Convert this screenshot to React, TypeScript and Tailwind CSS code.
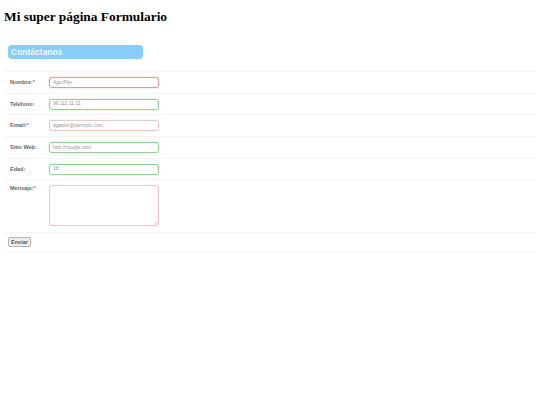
import React from 'react'

function Label({ text, required }: { text: string; required?: boolean }) {
  return (
    <label className="w-[34px] shrink-0 ml-[6px] text-[5.5px] leading-[7px] font-bold text-[#666]">
      {text}
      {required && <span className="text-[#e85050]">*</span>}
    </label>
  )
}

function Row({ label, value, required, strong }: { label: string; value: string; required?: boolean; strong?: boolean }) {
  const border = required
    ? strong
      ? 'border-[#d0a0a0] shadow-[0_0_2px_#f0b8b8]'
      : 'border-[#ecc8c8] shadow-[0_0_1px_#f4dcdc]'
    : 'border-[#94d094] shadow-[0_0_2px_#bce8bc]'
  return (
    <div className="h-[21.7px] flex items-center border-b border-[#f4f4f4]">
      <Label text={label} required={required} />
      <div className={`ml-[5px] w-[110px] h-[11px] bg-white rounded-[3px] border flex items-center pl-[3px] text-[5px] text-[#999] shrink-0 ${border}`}>
        {value}
      </div>
    </div>
  )
}

export default function App() {
  return (
    <div className="w-[540px] h-[405px] bg-white overflow-hidden font-['Liberation_Sans',sans-serif]">
      <h1 className="pt-[9px] pl-[4px] text-[13.4px] leading-[16px] font-bold text-black font-['Liberation_Serif',serif]">
        Mi super página Formulario
      </h1>
      <div className="ml-[8px] mt-[20px] w-[135px] h-[14px] rounded-[4px] bg-[#88cdfa] flex items-center pl-[3px] text-[8.5px] font-bold text-[#f0f8ff]">
        Contáctanos
      </div>
      <form className="mx-[4px] mt-[12px] border-t border-[#f4f4f4]">
        <Row label="Nombre:" value="Ago Pito" required strong />
        <Row label="Telefono:" value="96 111 11 11" />
        <Row label="Email:" value="agapito@ejemplo.com" required />
        <Row label="Sitio Web:" value="http://rscoge.com" />
        <Row label="Edad:" value="18" />
        <div className="h-[53px] flex items-start pt-[5px] border-b border-[#f4f4f4]">
          <Label text="Mensaje:" required />
          <div className="ml-[5px] w-[110px] h-[41px] bg-white rounded-[3px] border border-[#ecc8c8] shadow-[0_0_1px_#f4dcdc] relative shrink-0">
            <svg className="absolute right-0 bottom-0" width="4" height="4" viewBox="0 0 4 4">
              <path d="M0.5 3.5L3.5 0.5M2 3.5L3.5 2" stroke="#999" strokeWidth="0.5" />
            </svg>
          </div>
        </div>
        <div className="h-[19px] flex items-center border-b border-[#f4f4f4]">
          <button type="button" className="ml-[4px] w-[23px] h-[10px] rounded-[2px] bg-[#efefef] border border-[#b4b4b4] text-[5.5px] leading-none font-bold text-[#555]">
            Enviar
          </button>
        </div>
      </form>
    </div>
  )
}
